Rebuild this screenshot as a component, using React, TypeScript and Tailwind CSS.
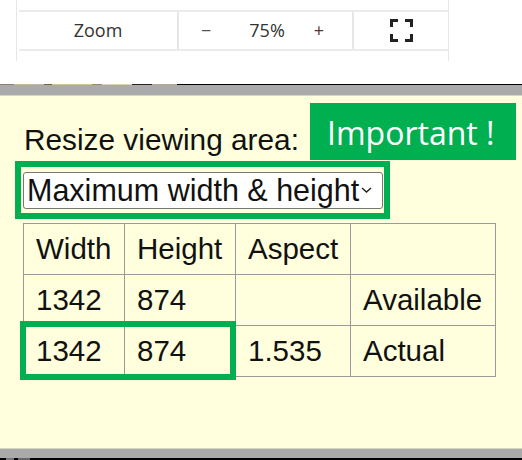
import React from "react";

const FullscreenIcon = () => (
  <svg width="23" height="23" viewBox="0 0 23 23" fill="#222">
    <rect x="0" y="0" width="8" height="3" />
    <rect x="0" y="0" width="3" height="8" />
    <rect x="15" y="0" width="8" height="3" />
    <rect x="20" y="0" width="3" height="8" />
    <rect x="0" y="20" width="8" height="3" />
    <rect x="0" y="15" width="3" height="8" />
    <rect x="15" y="20" width="8" height="3" />
    <rect x="20" y="15" width="3" height="8" />
  </svg>
);

const Chevron = () => (
  <svg width="11" height="6" viewBox="0 0 11 6" fill="none" stroke="#222" strokeWidth="1.4">
    <path d="M1 1 L5.5 5 L10 1" />
  </svg>
);

const cells: string[][] = [
  ["Width", "Height", "Aspect", ""],
  ["1342", "874", "", "Available"],
  ["1342", "874", "1.535", "Actual"],
];
const colW = ["w-[101px]", "w-[111px]", "w-[115px]", "w-[145px]"];

export default function App() {
  return (
    <div className="w-[522px] h-[460px] overflow-hidden bg-white flex flex-col">
      {/* top white area */}
      <div className="h-[84px] shrink-0 bg-white">
        <div className="ml-[16px] w-[433px] h-[61px] border-l border-r border-[#e6e6e6] pt-[10px] pl-[2px]">
          <div
            className="h-[41px] border-y-2 border-[#ebebeb] flex text-[18px] text-[#333]"
            style={{ fontFamily: '"Open Sans", "Noto Sans", sans-serif' }}
          >
            <div className="w-[160px] border-r-2 border-[#e6e6e6] flex items-center justify-center">
              Zoom
            </div>
            <div className="w-[175px] border-r-2 border-[#e6e6e6] flex items-center">
              <span className="ml-[22px] text-[#555]">−</span>
              <span className="ml-[38px]">75%</span>
              <span className="ml-[29px] text-[#533]">+</span>
            </div>
            <div className="flex-1 flex items-center justify-center">
              <FullscreenIcon />
            </div>
          </div>
        </div>
      </div>
      {/* top edge with image fragments */}
      <div className="h-[1px] shrink-0 flex bg-black">
        <div className="w-[14px] bg-[#8c7f70]" />
        <div className="w-[30px] bg-[#c9b79c]" />
        <div className="w-[8px] bg-[#6d6256]" />
        <div className="w-[40px] bg-[#d8c3a0]" />
        <div className="w-[10px] bg-[#9b8773]" />
        <div className="w-[30px] bg-[#e0d0b4]" />
        <div className="w-[20px] bg-[#2b241e]" />
        <div className="w-[25px] bg-[#b9a890]" />
      </div>
      <div className="h-[10px] shrink-0 bg-[#aaaaaa]" />
      <div className="h-[1px] shrink-0 bg-[#d6d6c4]" />
      {/* yellow body */}
      <div
        className="h-[352px] shrink-0 bg-[#ffffdd] text-[#111] pt-[7px]"
        style={{ fontFamily: '"Liberation Sans", Arial, sans-serif' }}
      >
        <div className="flex items-start h-[57px]">
          <div className="w-[310px] pl-[24px] mt-[20px] text-[29.8px] leading-[34px] whitespace-nowrap">
            Resize viewing area:
          </div>
          <div
            className="w-[206px] h-[57px] bg-[#00b050] text-white text-[32px] leading-[57px] pl-[17px] pt-[1px] whitespace-nowrap"
            style={{ fontFamily: '"Open Sans", "Noto Sans", sans-serif' }}
          >
            Important !
          </div>
        </div>
        <div className="ml-[15px] mt-[1px] w-[375px] h-[58px] border-[6px] border-[#00b050] flex items-center pl-[2px]">
          <div className="w-[360px] h-[37px] bg-white border border-[#767676] rounded-[3px] flex items-center pl-[3px] pr-[10px]">
            <span className="flex-1 text-[30.5px] leading-[35px] whitespace-nowrap">
              Maximum width &amp; height
            </span>
            <Chevron />
          </div>
        </div>
        <div className="relative ml-[23px] mt-[4px] w-[473px]">
          <div className="border-l border-t border-[#9a9a9a] inline-flex flex-col">
            {cells.map((row, ri) => (
              <div key={ri} className="flex">
                {row.map((c, ci) => (
                  <div
                    key={ci}
                    className={`${colW[ci]} h-[51px] border-r border-b border-[#9a9a9a] flex items-center pl-[12px] text-[29.5px] leading-[34px] whitespace-nowrap`}
                  >
                    {c}
                  </div>
                ))}
              </div>
            ))}
          </div>
          <div className="absolute left-[-3px] top-[98px] w-[216px] h-[59px] border-[6px] border-[#00b050]" />
        </div>
      </div>
      <div className="h-[1px] shrink-0 bg-[#d6d6c4]" />
      <div className="h-[9px] shrink-0 bg-[#aaaaaa]" />
      <div className="h-[2px] shrink-0 bg-black flex">
        <div className="w-[6px]" />
        <div className="w-[8px] bg-[#777]" />
        <div className="w-[4px]" />
        <div className="w-[12px] bg-[#666]" />
      </div>
    </div>
  );
}
